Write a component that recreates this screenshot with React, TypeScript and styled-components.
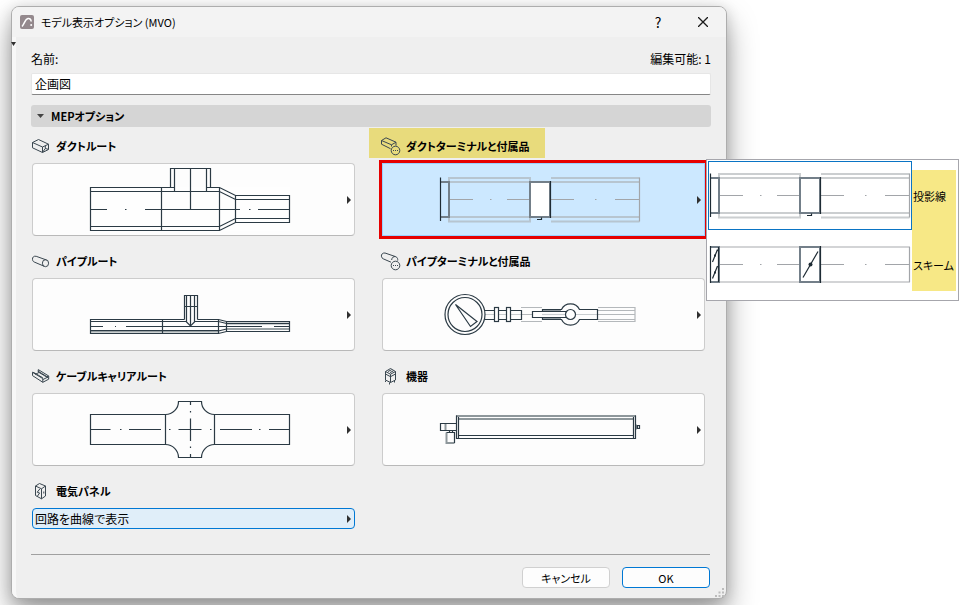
import React from "react";
import styled, { createGlobalStyle, css } from "styled-components";

const GlobalStyle = createGlobalStyle`
  * { box-sizing: border-box; }
  body {
    margin: 0;
    min-height: 100vh;
    background: #ffffff;
    color: #000000;
    font-family: "Noto Sans CJK JP", sans-serif;
    font-size: 12px;
    line-height: 16px;
    font-feature-settings: "palt";
    overflow: hidden;
  }
  button, input, select {
    font: inherit;
    color: inherit;
    font-feature-settings: inherit;
    margin: 0;
  }
`;

const Page = styled.div`
  padding: 6px 240px 5px 11px;
`;

const Dialog = styled.main`
  position: relative;
  border: 1px solid #adadad;
  border-radius: 8px;
  background: #efefef;
  box-shadow: 0 16px 30px rgba(0, 0, 0, 0.36), 0 2px 14px rgba(0, 0, 0, 0.16);
`;

const TitleBar = styled.header`
  display: flex;
  align-items: center;
  gap: 7px;
  height: 30px;
  padding: 0 10px 0 8px;
  border-radius: 7px 7px 0 0;
  background: #f3f3f3;
`;

const Title = styled.h1`
  flex: 1;
  margin: 0;
  font-size: 11px;
  font-weight: 400;
`;

const TitleButton = styled.button`
  display: grid;
  place-items: center;
  width: 26px;
  height: 26px;
  padding: 0;
  border: 0;
  background: none;
  font-size: 14px;
`;

const TitleActions = styled.div`
  display: flex;
  gap: 19px;
`;

const Body = styled.div`
  display: flex;
  flex-direction: column;
  padding: 14px 15px 10px;
  border-left: 4px solid #f8f8f8;
  border-radius: 0 0 7px 7px;
`;

const DockMark = styled.svg`
  position: absolute;
  left: -1px;
  top: 35px;
`;

const NameRow = styled.div`
  display: flex;
  justify-content: space-between;
  margin-bottom: 6px;
`;

const NameInput = styled.input`
  width: 100%;
  height: 22px;
  padding: 0 3px 2px;
  border: 1px solid #e6e6e6;
  border-bottom-color: #868686;
  border-radius: 2px;
  background: #ffffff;
  outline: none;
`;

const SectionToggle = styled.button`
  display: flex;
  align-items: center;
  gap: 7px;
  height: 22px;
  margin: 10px 0;
  padding: 0 6px;
  border: 0;
  border-radius: 3px;
  background: #d5d5d5;
  font-size: 11px;
  font-weight: 700;
`;

const OptionGrid = styled.div`
  display: grid;
  grid-template-columns: 1fr 1fr;
  gap: 16px 27px;
  padding: 0 6px 0 1px;
`;

const OptionCell = styled.div`
  display: flex;
  flex-direction: column;
  align-items: flex-start;
  gap: 8px;
  min-width: 0;
`;

const OptionLabel = styled.label<{ $marked?: boolean }>`
  position: relative;
  isolation: isolate;
  display: flex;
  align-items: center;
  gap: 6px;
  height: 18px;
  font-size: 11px;
  font-weight: 700;
  ${(p) =>
    p.$marked &&
    css`
      &::before {
        content: "";
        position: absolute;
        inset: -9px -16px -3px -13px;
        background: #e8db7c;
        z-index: -1;
      }
    `}
`;

const PreviewArea = styled.div`
  position: relative;
  width: 100%;
`;

const PreviewButton = styled.button<{ $selected?: boolean }>`
  display: grid;
  grid-template-columns: 1fr auto 1fr;
  align-items: center;
  width: 100%;
  height: 73px;
  padding: 0 3px;
  border: 1px solid ${(p) => (p.$selected ? "#99d1ff" : "#cccccc")};
  border-bottom-color: ${(p) => (p.$selected ? "#99d1ff" : "#b9b9b9")};
  border-radius: ${(p) => (p.$selected ? "0" : "4px")};
  background: ${(p) => (p.$selected ? "#cce8ff" : "#fdfdfd")};
  outline: ${(p) => (p.$selected ? "3px solid #e60000" : "none")};
`;

const Drawing = styled.svg`
  display: block;
  grid-column: 2;
  fill: none;
  stroke: #2b3a44;
  stroke-width: 1.2;
`;

const ArrowIcon = styled.svg`
  display: block;
  justify-self: end;
  fill: #303030;
`;

const SelectBox = styled.div`
  display: grid;
  align-items: center;
  width: 100%;
  & > * {
    grid-area: 1 / 1;
  }
  & > svg {
    margin-right: 4px;
    pointer-events: none;
  }
`;

const Select = styled.select`
  appearance: none;
  width: 100%;
  height: 21px;
  padding: 0 16px 0 2px;
  border: 1px solid #0078d4;
  border-radius: 4px;
  background: #e0eef9;
  outline: none;
`;

const Footer = styled.footer`
  display: flex;
  justify-content: flex-end;
  gap: 12px;
  margin: 25px 1px 0 0;
  padding-top: 12px;
  border-top: 1px solid #a0a0a0;
`;

const PushButton = styled.button<{ $primary?: boolean }>`
  width: 88px;
  height: 21px;
  padding: 0;
  border: 1px solid ${(p) => (p.$primary ? "#0078d4" : "#d0d0d0")};
  border-radius: 4px;
  background: #fdfdfd;
  font-size: 11px;
  line-height: 18px;
`;

const ResizeGrip = styled.svg`
  position: absolute;
  right: 2px;
  bottom: 1px;
  fill: #bcbcbc;
`;

const Flyout = styled.div`
  position: absolute;
  left: calc(100% + 1px);
  top: -4px;
  z-index: 2;
  display: flex;
  align-items: center;
  padding: 1px;
  border: 1px solid #a6a6ac;
  background: #ffffff;
`;

const FlyoutPictures = styled.div`
  display: flex;
  flex-direction: column;
`;

const PictureButton = styled.button<{ $selected?: boolean }>`
  display: block;
  padding: 0;
  border: 1px solid ${(p) => (p.$selected ? "#0a74c4" : "transparent")};
  background: none;
`;

const FlyoutNames = styled.div`
  display: flex;
  flex-direction: column;
  justify-content: space-between;
  width: 44px;
  height: 121px;
  margin-right: 1px;
  padding: 18px 0 18px 1px;
  background: #f7e886;
  font-size: 11px;
  white-space: nowrap;
`;

const Icon = styled.svg`
  display: block;
  width: 18px;
  height: 18px;
  overflow: visible;
  fill: none;
  stroke: #3a4750;
  stroke-width: 1;
  stroke-linejoin: round;
`;

const RightArrow = () => (
  <ArrowIcon width="4" height="8" viewBox="0 0 4 8" aria-hidden="true">
    <path d="M0 0L4 4L0 8Z" />
  </ArrowIcon>
);

const More = () => (
  <>
    <circle cx="13.5" cy="13.5" r="4.3" />
    <path d="M11 13.5h1M13 13.5h1M15 13.5h1" />
  </>
);

const DuctIcon = () => (
  <Icon viewBox="0 0 18 18" aria-hidden="true">
    <path d="M.5 5.5L6.5 2.5L16.5 7.2L10.5 10ZM.5 5.5V10.8L10.5 15.5V10M10.5 15.5L16.5 12.5V7.2M10.8 15L13.3 11.5V9M13.3 11.5L16.3 12.3" />
  </Icon>
);

const DuctTerminalIcon = () => (
  <Icon viewBox="0 0 18 18" aria-hidden="true">
    <path d="M-.5 3.5L4 .8L14 5.2L9.5 7.8ZM-.5 3.5V7.2L8.5 11.7M9.5 7.8V9.5M14 5.2V8.6" />
    <More />
  </Icon>
);

const PipeIcon = () => (
  <Icon viewBox="0 0 18 18" aria-hidden="true">
    <path d="M4.2 4.3L14.5 8M2.2 10L12 14.2M4.2 4.3C1.8 3.7 .2 5.4 .5 7.3C.6 8.7 1.2 9.6 2.2 10" />
    <ellipse cx="13.5" cy="11.2" rx="3.1" ry="3.5" />
  </Icon>
);

const PipeTerminalIcon = () => (
  <Icon viewBox="0 0 18 18" aria-hidden="true">
    <path d="M3 1L13.5 4.6M1.2 6.8L9 10.2M3 1C.6 .7 -.9 2.5 -.6 4.2C-.4 5.5 .2 6.4 1.2 6.8M13.5 4.6C15.6 5.3 15.9 7.2 15.7 8.6M13.5 4.6C11.3 4.2 10 5.6 9.6 8" />
    <More />
  </Icon>
);

const CableIcon = () => (
  <Icon viewBox="0 0 18 18" aria-hidden="true">
    <path d="M.5 5.3V8.6L10.8 15.3L16.7 12.2V9M.5 5.3L10.8 11.6V15.3M.5 5.3L2.2 5.7L10.8 10.8M3.2 7.4L7.5 5.2M6.3 2.6V5L16.7 11.2M6.3 2.6L16.7 9L15 9.7L5.8 4M10.8 12.6L15 10.5" />
  </Icon>
);

const EquipmentIcon = () => (
  <Icon viewBox="0 0 18 18" aria-hidden="true">
    <path d="M3.5 4.5L8.5 1.5L13.5 4.5L8.5 7.2ZM3.5 4.5V13L8.5 15.5L13.5 13V4.5M8.5 7.2V15.5M3.5 7L8.5 9.7L13.5 7M3.5 13.5V15M7.5 15.5V17.5M12.5 14V15.5M6 4.5L9.5 2.8M8 5.6L11.5 3.8" />
  </Icon>
);

const PanelIcon = () => (
  <Icon viewBox="0 0 18 18" aria-hidden="true">
    <path d="M3.5 4L7.5 1.5L13.5 4L9.5 6.8ZM3.5 4V13.5L9.5 16.8V6.8M9.5 16.8L13.5 14V4M7.8 7L5.2 10.2L7.6 11L5.4 14.2M11.8 9.5V11.5" />
  </Icon>
);

const DuctDrawing = () => (
  <Drawing width="209" height="71" viewBox="69 34 209 71" aria-hidden="true">
    <rect x="70" y="57" width="200" height="44" fill="#ffffff" stroke="none" opacity=".4" />
    <path d="M154.5 57.5H70.5V100.5H199.5L215.5 92.5H269.5V65.5H215.5L199.5 57.5H186.5M70.5 61.5H199.5L215.5 69.5H269.5M70.5 96.5H199.5L215.5 88.5H269.5M141.5 57.5V100.5M199.5 57.5V100.5M215.5 65.5V92.5" />
    <path d="M150.5 57.5V38.5H190.5V57.5M154.5 38.5V61.5M186.5 38.5V61.5M170.5 38.5V79.5" />
    <path d="M70.5 79.5H87M105 79.5H106.5M125 79.5H220M229 79.5H230.5M238 79.5H269.5" />
  </Drawing>
);

const PipeDrawing = () => (
  <Drawing width="209" height="71" viewBox="69 34 209 71" aria-hidden="true">
    <path d="M71 86.5H199M207 84H269M207 78.5H269" stroke="#9aa3a6" strokeWidth="2" />
    <path d="M164.5 74.5H70.5V88.5H198.5L206.5 86.5H269.5V76.5H206.5L198.5 74.5H177.5M70.5 76.5H166.5M174.5 76.5H198.5L206.5 78.5H269.5M198.5 86L206.5 84M70.5 85.5H198.5M142.5 74.5V88.5M198.5 74.5V88.5M206.5 76.5V86.5" />
    <path d="M164.5 74.5V50.5H177.5V74.5M166.5 50.5V77L170.5 81L174.5 77V50.5M170.5 50.5V81M164.5 61.5H177.5" />
    <path d="M70.5 81.5H83M95 81.5H96M106 81.5H242M254 81.5H269.5" />
  </Drawing>
);

const CableDrawing = () => (
  <Drawing width="209" height="71" viewBox="69 34 209 71" aria-hidden="true">
    <path d="M145.5 54.5H70.5V84.5H145.5ZM194.5 54.5H269.5V84.5H194.5Z" />
    <path d="M145.5 54.5A13 13 0 0 0 158.5 41.5H181.5A13 13 0 0 0 194.5 54.5M145.5 84.5A13 13 0 0 1 158.5 97.5H181.5A13 13 0 0 1 194.5 84.5" />
    <path d="M70.5 69.5H90.5M100 69.5H101.5M109 69.5H141M149 69.5H150.5M158.5 69.5H181.5M190 69.5H191.5M200 69.5H232M239 69.5H240.5M249 69.5H269.5M170.5 42V45M170.5 51V52.5M170.5 58.5V81M170.5 86.5V88M170.5 94V97" />
  </Drawing>
);

const TerminalShapes = () => (
  <>
    <path
      d="M84 53H165V96.500H84ZM84 57H165M84 92H165M186 53H274.500M186 57H274.500M186 92H274.500M186 96.500H274.500"
      stroke="#a9adb1"
      strokeOpacity=".6"
      strokeWidth="2"
    />
    <path d="M84 74.500H108M125 74.500H126.500M142 74.500H165M186 74.500H209M230 74.500H231.500M250 74.500H274M274.500 52.500V96.500" stroke="#a2a5a9" />
    <path d="M76 57H84V92H76" stroke="#737f89" strokeWidth="2" />
    <path d="M75.500 52.500V96" stroke="#1e2b34" />
    <rect x="165" y="57" width="20" height="35" fill="#ffffff" stroke="#737f89" strokeWidth="2" />
    <path d="M185.500 56V93M172 94.500H176.500V92.500" stroke="#1e2b34" />
  </>
);

const DuctTerminalDrawing = () => (
  <Drawing width="209" height="71" viewBox="74 39 209 71" aria-hidden="true">
    <TerminalShapes />
  </Drawing>
);

const ProjectionDrawing = () => (
  <Drawing width="202" height="67" viewBox="74 41 202 67" aria-hidden="true">
    <TerminalShapes />
  </Drawing>
);

const SchemeDrawing = () => (
  <Drawing width="202" height="67" viewBox="9 81 202 67" aria-hidden="true">
    <path d="M19 97H210M19 132H210" stroke="#d3d4d6" strokeWidth="2" />
    <path d="M19 114.500H43M60 114.500H61.500M77 114.500H100M121 114.500H144M165 114.500H166.500M185 114.500H209M209.500 97V132" stroke="#a2a5a9" />
    <rect x="100" y="97" width="20" height="35" fill="#ffffff" stroke="#737f89" strokeWidth="2" />
    <path d="M11 97H19V132H11" stroke="#737f89" strokeWidth="2" />
    <path d="M10.500 96V133M120.500 96V133M18.500 97V132M12.500 112L17.500 99.500M12.500 128.500L17.500 116M103 127.500L118 101.500" stroke="#1e2b34" />
    <path d="M14 105.500H16M14 122.500H16" stroke="#1e2b34" strokeWidth="2" />
    <circle cx="110.500" cy="114.500" r="2" fill="#1e2b34" stroke="none" />
  </Drawing>
);

const PipeTerminalDrawing = () => (
  <Drawing width="209" height="71" viewBox="69 34 209 71" aria-hidden="true">
    <path d="M151 62.500H172M151 76.500H172M151 69.500H163M228 62.500H265V76.500H228M228 69.500H265M228 65.500H265M228 74.500H265" stroke="#b4b8bb" />
    <path d="M115 69.500H151M205 69.500H227" stroke="#c9cdd0" />
    <circle cx="95" cy="69.500" r="20" />
    <circle cx="95" cy="69.500" r="17" />
    <path d="M85.500 59.500L107 76.500L100.500 81.500Z" />
    <path d="M114.500 65.500H151.500V74.500H114.500" />
    <rect x="124.500" y="62.500" width="4" height="14" fill="#ffffff" />
    <rect x="136.500" y="62.500" width="4" height="14" fill="#ffffff" />
    <path d="M172.500 66.500V64.500H191.500A10 10 0 0 1 209.500 64.500H227.500V74.500H209.500A10 10 0 0 1 191.500 74.500H172.500V72.500" />
    <path d="M173 65.500H191M173 73.500H191" stroke="#8e979d" />
    <path d="M162.500 66.500H196.500V72.500H162.500Z" fill="#ffffff" />
    <path d="M172 69.500H196" stroke="#c9cdd0" />
    <circle cx="200.500" cy="69.500" r="5" fill="#ffffff" />
  </Drawing>
);

const EquipmentDrawing = () => (
  <Drawing width="209" height="71" viewBox="69 34 209 71" aria-hidden="true">
    <path d="M86 56H266M88 59H264M75.500 64V70" stroke="#8e979b" strokeWidth="2" />
    <path d="M86.500 55.500V78.500H265.500V55.500M88.500 57V78M263.500 57V78M88.500 75.500H263.500M86.500 63.500H70.500V70.500H86.500M79.500 70.500V72M82.500 70.500V72M267.500 65.500H269.500V68.500H267.500ZM266 64.500V69.500" />
    <path d="M76.500 72.500V83H84.500" stroke="#8e979b" strokeWidth="2" />
    <path d="M76.500 72.500H84.500V83" />
  </Drawing>
);

type Option = {
  id: string;
  name: string;
  icon: () => React.ReactElement;
  drawing: () => React.ReactElement;
  selected?: boolean;
};

const options: Option[] = [
  { id: "duct", name: "ダクトルート", icon: DuctIcon, drawing: DuctDrawing },
  { id: "duct-terminal", name: "ダクトターミナルと付属品", icon: DuctTerminalIcon, drawing: DuctTerminalDrawing, selected: true },
  { id: "pipe", name: "パイプルート", icon: PipeIcon, drawing: PipeDrawing },
  { id: "pipe-terminal", name: "パイプターミナルと付属品", icon: PipeTerminalIcon, drawing: PipeTerminalDrawing },
  { id: "cable", name: "ケーブルキャリアルート", icon: CableIcon, drawing: CableDrawing },
  { id: "equipment", name: "機器", icon: EquipmentIcon, drawing: EquipmentDrawing },
];

const TerminalFlyout = () => (
  <Flyout>
    <FlyoutPictures>
      <PictureButton id="projection" type="button" $selected>
        <ProjectionDrawing />
      </PictureButton>
      <PictureButton id="scheme" type="button">
        <SchemeDrawing />
      </PictureButton>
    </FlyoutPictures>
    <FlyoutNames>
      <label htmlFor="projection">投影線</label>
      <label htmlFor="scheme">スキーム</label>
    </FlyoutNames>
  </Flyout>
);

export default function App() {
  return (
    <>
      <GlobalStyle />
      <Page>
        <Dialog>
          <TitleBar>
            <svg width="14" height="14" viewBox="0 0 14 14" aria-hidden="true">
              <rect width="14" height="14" rx="2" fill="#94898d" />
              <path d="M2 11.500C4.500 9 5 4 8 3.500C10 3.200 11 4.500 11.200 6.500" fill="none" stroke="#ffffff" strokeWidth="1.500" />
              <circle cx="11.200" cy="10" r="1" fill="#ffffff" />
            </svg>
            <Title>モデル表示オプション (MVO)</Title>
            <TitleActions>
              <TitleButton type="button">?</TitleButton>
              <TitleButton type="button" aria-label="閉じる">
                <svg width="10" height="10" viewBox="0 0 10 10" stroke="#1a1a1a" strokeWidth="1.300" aria-hidden="true">
                  <path d="M0 0L10 10M10 0L0 10" />
                </svg>
              </TitleButton>
            </TitleActions>
          </TitleBar>
          <Body>
            <NameRow>
              <label htmlFor="name">名前:</label>
              <span>編集可能: 1</span>
            </NameRow>
            <NameInput id="name" defaultValue="企画図" />
            <SectionToggle type="button" aria-expanded="true">
              <svg width="7" height="4" viewBox="0 0 7 4" fill="#444444" aria-hidden="true">
                <path d="M0 0H7L3.500 4Z" />
              </svg>
              MEPオプション
            </SectionToggle>
            <OptionGrid>
              {options.map(({ id, name, icon: OptionIcon, drawing: Picture, selected }) => (
                <OptionCell key={id}>
                  <OptionLabel htmlFor={id} $marked={selected}>
                    <OptionIcon />
                    {name}
                  </OptionLabel>
                  <PreviewArea>
                    <PreviewButton id={id} type="button" $selected={selected}>
                      <Picture />
                      <RightArrow />
                    </PreviewButton>
                    {selected && <TerminalFlyout />}
                  </PreviewArea>
                </OptionCell>
              ))}
              <OptionCell>
                <OptionLabel htmlFor="panel">
                  <PanelIcon />
                  電気パネル
                </OptionLabel>
                <SelectBox>
                  <Select id="panel">
                    <option>回路を曲線で表示</option>
                  </Select>
                  <RightArrow />
                </SelectBox>
              </OptionCell>
            </OptionGrid>
            <Footer>
              <PushButton type="button">キャンセル</PushButton>
              <PushButton type="button" $primary>
                OK
              </PushButton>
            </Footer>
          </Body>
          <DockMark width="5" height="4" viewBox="0 0 5 4" fill="#303030" aria-hidden="true">
            <path d="M0 0H5L2.500 4Z" />
          </DockMark>
          <ResizeGrip width="9" height="9" viewBox="0 0 9 9" aria-hidden="true">
            <path d="M7 0h2v2h-2ZM3.500 3.500h2v2h-2ZM7 3.500h2v2h-2ZM0 7h2v2h-2ZM3.500 7h2v2h-2ZM7 7h2v2h-2Z" />
          </ResizeGrip>
        </Dialog>
      </Page>
    </>
  );
}
